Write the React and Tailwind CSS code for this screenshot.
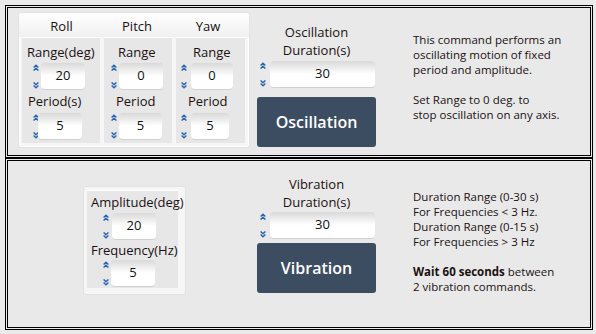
import React from "react";

function Up() {
  return (
    <svg width="6" height="7" viewBox="0 0 6 7" className="block">
      <path d="M0.6 3.6 L3 1.2 L5.4 3.6 M0.6 6.6 L3 4.2 L5.4 6.6" fill="none" stroke="#2c66b0" strokeWidth="1.4" />
    </svg>
  );
}
function Down() {
  return (
    <svg width="6" height="7" viewBox="0 0 6 7" className="block">
      <path d="M0.6 0.4 L3 2.8 L5.4 0.4 M0.6 3.4 L3 5.8 L5.4 3.4" fill="none" stroke="#2c66b0" strokeWidth="1.4" />
    </svg>
  );
}

function Spin({ row, box, value }) {
  return (
    <div className={"flex items-stretch h-[27px] " + row}>
      <div className="flex flex-col justify-between py-[1px] w-[6px] shrink-0">
        <Up />
        <Down />
      </div>
      <div
        className={
          "flex items-center justify-center rounded-[4px] bg-gradient-to-b from-[#d9d9d9] via-[#ffffff] to-[#ffffff] border-b border-[#d0d0d0] text-[13px] text-[#111] shrink-0 " +
          box
        }
      >
        {value}
      </div>
    </div>
  );
}

function Label({ children, cls }) {
  return <div className={"h-[17px] leading-[17px] text-[13px] text-[#1a1111] whitespace-nowrap " + cls}>{children}</div>;
}

export default function App() {
  return (
    <div
      className="w-[596px] h-[334px] bg-[#ebebeb] pt-[5px] pl-[5px]"
      style={{ fontFamily: '"Open Sans", "Noto Sans", sans-serif' }}
    >
      {/* top panel */}
      <div className="w-[588px] h-[153px] border-[3px] border-double border-black bg-[#e9e9e9] flex items-start">
        {/* card */}
        <div className="ml-[10px] mt-[4px] w-[232px] h-[136px] rounded-[3px] bg-[#f6f6f6] border border-[#e2e2e2] shadow-[0_0_0_1px_#ffffff_inset] flex flex-col">
          <div className="h-[24px] flex rounded-t-[3px] bg-gradient-to-b from-[#ffffff] to-[#f0f0f0] text-[13px] text-[#1a1111]">
            <div className="w-[82px] pl-[3px] text-center leading-[27px]">Roll</div>
            <div className="w-[72px] text-center leading-[27px]">Pitch</div>
            <div className="w-[70px] text-center leading-[27px]">Yaw</div>
          </div>
          <div className="flex gap-[4px] px-[3px] h-[106px]">
            {/* Roll */}
            <div className="w-[78px] bg-[#e7e7e7] border-t border-white pt-[6px]">
              <Label cls="pl-[5px]">Range(deg)</Label>
              <Spin row="pl-[11px] mt-[2px]" box="ml-[2px] w-[44px]" value="20" />
              <Label cls="pl-[6px] mt-[3px]">Period(s)</Label>
              <Spin row="pl-[11px] mt-[3px]" box="ml-[-1px] w-[44px]" value="5" />
            </div>
            {/* Pitch */}
            <div className="w-[68px] bg-[#e7e7e7] border-t border-white pt-[6px]">
              <Label cls="pl-[14px]">Range</Label>
              <Spin row="pl-[7px] mt-[2px]" box="ml-[2px] w-[44px]" value="0" />
              <Label cls="pl-[12px] mt-[3px]">Period</Label>
              <Spin row="pl-[7px] mt-[3px]" box="ml-[2px] w-[43px]" value="5" />
            </div>
            {/* Yaw */}
            <div className="w-[69px] bg-[#e7e7e7] border-t border-white pt-[6px]">
              <Label cls="pl-[17px]">Range</Label>
              <Spin row="pl-[5px] mt-[2px]" box="ml-[4px] w-[42px]" value="0" />
              <Label cls="pl-[12px] mt-[3px]">Period</Label>
              <Spin row="pl-[5px] mt-[3px]" box="ml-[4px] w-[38px]" value="5" />
            </div>
          </div>
        </div>
        {/* oscillation column */}
        <div className="ml-[7px] mt-[15px] w-[119px] flex flex-col">
          <div className="text-center text-[13px] leading-[18px] text-[#1a1111]">Oscillation</div>
          <div className="text-center text-[13px] leading-[18px] text-[#1a1111]">Duration(s)</div>
          <Spin row="pl-[3px] mt-[2px]" box="ml-[4px] w-[105px]" value="30" />
          <div className="mt-[9px] h-[50px] rounded-[3px] bg-[#3c4d62] flex items-center justify-center text-white text-[16px] font-semibold">
            Oscillation
          </div>
        </div>
        {/* description */}
        <div className="ml-[37px] mt-[24px] text-[11.5px] leading-[15px] text-[#1a1111]">
          <div>This command performs an</div>
          <div>oscillating motion of fixed</div>
          <div>period and amplitude.</div>
          <div className="h-[15px]" />
          <div>Set Range to 0 deg. to</div>
          <div>stop oscillation on any axis.</div>
        </div>
      </div>

      {/* bottom panel */}
      <div className="w-[588px] h-[172px] border-[3px] border-double border-black bg-[#e9e9e9] flex items-start">
        <div className="ml-[75px] mt-[25px] w-[103px] h-[109px] rounded-[3px] bg-[#f6f6f6] border border-[#e2e2e2] pt-[3px] pl-[3px]">
          <div className="w-[91px] h-[98px] bg-[#e7e7e7] border-t border-white pt-[3px]">
            <Label cls="pl-[4px]">Amplitude(deg)</Label>
            <Spin row="pl-[16px] mt-[2px]" box="ml-[3px] w-[44px]" value="20" />
            <Label cls="pl-[4px] mt-[2px]">Frequency(Hz)</Label>
            <Spin row="pl-[16px] mt-[1px]" box="ml-[2px] w-[44px]" value="5" />
          </div>
        </div>
        <div className="ml-[71px] mt-[14px] w-[119px] flex flex-col">
          <div className="text-center text-[13px] leading-[18px] text-[#1a1111]">Vibration</div>
          <div className="text-center text-[13px] leading-[18px] text-[#1a1111]">Duration(s)</div>
          <Spin row="pl-[3px] mt-[1px]" box="ml-[4px] w-[105px]" value="30" />
          <div className="mt-[4px] h-[50px] rounded-[3px] bg-[#3c4d62] flex items-center justify-center text-white text-[16px] font-semibold">
            Vibration
          </div>
        </div>
        <div className="ml-[37px] mt-[28px] text-[11.5px] leading-[15px] text-[#1a1111]">
          <div>Duration Range (0-30 s)</div>
          <div>For Frequencies &lt; 3 Hz.</div>
          <div>Duration Range (0-15 s)</div>
          <div>For Frequencies &gt; 3 Hz</div>
          <div className="h-[15px]" />
          <div>
            <span className="font-bold">Wait 60 seconds</span> between
          </div>
          <div>2 vibration commands.</div>
        </div>
      </div>
    </div>
  );
}
